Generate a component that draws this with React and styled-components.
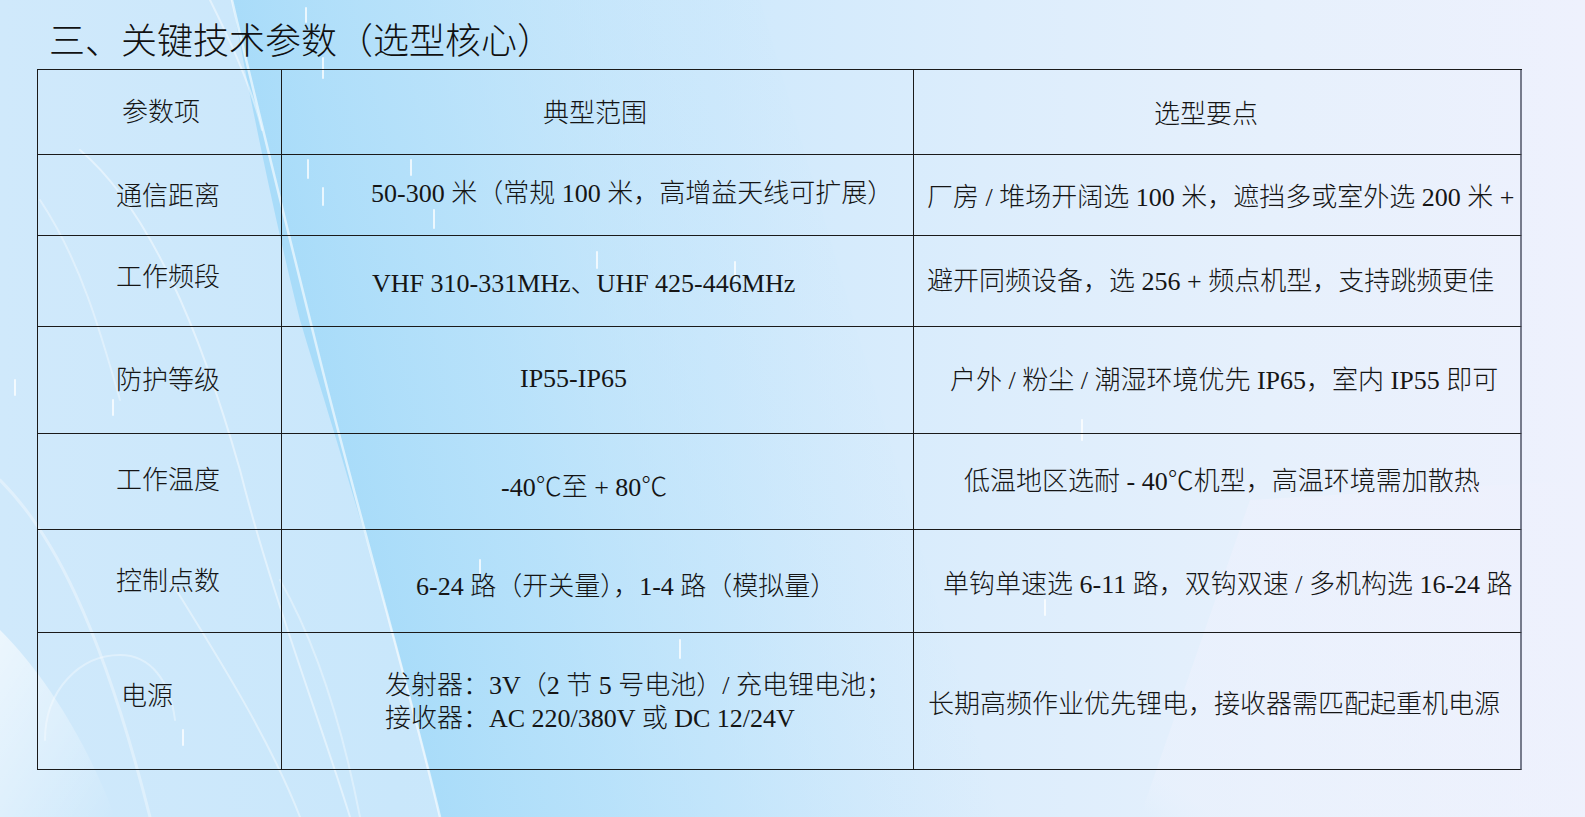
import React from "react";
import styled, { createGlobalStyle } from "styled-components";

const GlobalStyle = createGlobalStyle`
  html, body {
    margin: 0;
    padding: 0;
    overflow: hidden;
  }
  body {
    font-family: "Liberation Serif", "Noto Sans CJK SC", serif;
    color: #111;
  }
`;

const rows = [
  {
    label: "通信距离",
    range: ["50-300 米（常规 100 米，高增益天线可扩展）"],
    tip: "厂房 / 堆场开阔选 100 米，遮挡多或室外选 200 米 +",
    height: 81,
    pads: [78, 89, 13],
    dys: [1, -2, 2],
  },
  {
    label: "工作频段",
    range: ["VHF 310-331MHz、UHF 425-446MHz"],
    tip: "避开同频设备，选 256 + 频点机型，支持跳频更佳",
    height: 91,
    pads: [78, 90, 13],
    dys: [-4, 2, 0],
  },
  {
    label: "防护等级",
    range: ["IP55-IP65"],
    tip: "户外 / 粉尘 / 潮湿环境优先 IP65，室内 IP55 即可",
    height: 107,
    pads: [78, 238, 36],
    dys: [0, -2, 0],
  },
  {
    label: "工作温度",
    range: ["-40℃至 + 80℃"],
    tip: "低温地区选耐 - 40℃机型，高温环境需加散热",
    height: 96,
    pads: [78, 219, 50],
    dys: [-1, 6, 0],
  },
  {
    label: "控制点数",
    range: ["6-24 路（开关量），1-4 路（模拟量）"],
    tip: "单钩单速选 6-11 路，双钩双速 / 多机构选 16-24 路",
    height: 103,
    pads: [78, 134, 29],
    dys: [0, 5, 3],
  },
  {
    label: "电源",
    range: [
      "发射器：3V（2 节 5 号电池）/ 充电锂电池；",
      "接收器：AC 220/380V 或 DC 12/24V",
    ],
    tip: "长期高频作业优先锂电，接收器需匹配起重机电源",
    height: 137,
    pads: [83, 103, 14],
    dys: [-5, 1, 3],
  },
];

const Slide = styled.div`
  position: relative;
  width: 1585px;
  height: 817px;
  overflow: hidden;
  background: linear-gradient(
    90deg,
    #d0e9fb 0%,
    #c9e7fb 25%,
    #cfe9fc 45%,
    #dcedfc 62%,
    #e6f0fc 80%,
    #eef1fd 100%
  );
`;

const Backdrop = styled.svg`
  position: absolute;
  inset: 0;
  width: 100%;
  height: 100%;
  pointer-events: none;
`;

const Content = styled.div`
  position: relative;
  display: flex;
  flex-direction: column;
`;

const Title = styled.h1`
  margin: 0;
  height: 69px;
  box-sizing: border-box;
  padding: 6px 0 0 49px;
  display: flex;
  align-items: center;
  font-family: "Noto Sans CJK SC", sans-serif;
  font-weight: 300;
  font-size: 36px;
  letter-spacing: 0;
  text-spacing-trim: space-all;
  color: #111;
`;

const Table = styled.div`
  margin-left: 37px;
  width: 1485px;
  display: grid;
  grid-template-columns: 244px 632px 608px;
  border-top: 1px solid #1a1a1a;
  border-left: 1px solid #1a1a1a;
  box-sizing: border-box;
`;

const Cell = styled.div`
  box-sizing: border-box;
  height: ${(p) => p.$h}px;
  border-right: ${(p) => (p.$last ? "2px solid #767b8c" : "1px solid #1a1a1a")};
  border-bottom: 1px solid #1a1a1a;
  display: flex;
  flex-direction: column;
  justify-content: center;
  align-items: flex-start;
  padding-left: ${(p) => p.$pad || 0}px;
  padding-top: ${(p) => (p.$dy > 0 ? p.$dy * 2 : 0)}px;
  padding-bottom: ${(p) => (p.$dy < 0 ? -p.$dy * 2 : 0)}px;
  font-size: 26px;
  font-weight: 300;
  line-height: 33px;
  white-space: nowrap;
  color: #151515;
`;

const Line = styled.span`
  display: block;
`;

function Background() {
  return (
    <Backdrop viewBox="0 0 1585 817" preserveAspectRatio="none">
      <defs>
        <linearGradient id="band" gradientUnits="userSpaceOnUse" x1="250" y1="200" x2="820" y2="60">
          <stop offset="0" stopColor="#a6dbf9" stopOpacity="1" />
          <stop offset="0.35" stopColor="#b3e0fa" stopOpacity="0.8" />
          <stop offset="1" stopColor="#c9e7fb" stopOpacity="0" />
        </linearGradient>
        <linearGradient id="pale" gradientUnits="userSpaceOnUse" x1="1150" y1="817" x2="1400" y2="500">
          <stop offset="0" stopColor="#f0f4fe" stopOpacity="0" />
          <stop offset="0.1" stopColor="#edf2fd" stopOpacity="0.5" />
          <stop offset="1" stopColor="#eef1fd" stopOpacity="0.7" />
        </linearGradient>
        <linearGradient id="glow" x1="0" y1="0" x2="1" y2="1">
          <stop offset="0" stopColor="#ffffff" stopOpacity="0.6" />
          <stop offset="1" stopColor="#ffffff" stopOpacity="0" />
        </linearGradient>
      </defs>
      <path d="M232 0 L760 0 L1000 817 L440 817 C 400 640 330 420 300 320 C 275 220 250 100 232 0 Z" fill="url(#band)" />
      <path d="M1140 817 L1250 500 L1585 480 L1585 817 Z" fill="url(#pale)" />
      <path d="M0 630 C 50 680 90 750 115 817 L 0 817 Z" fill="url(#glow)" />
      <g fill="none" stroke="#ffffff" strokeLinecap="round">
        <path d="M232 0 C 260 120 290 240 320 360 C 360 520 410 690 440 817" strokeOpacity="0.6" strokeWidth="2.5" />
        <path d="M80 150 C 150 210 200 330 240 470 C 270 590 320 720 350 817" strokeOpacity="0.45" strokeWidth="2" />
        <path d="M40 200 C 80 260 100 330 120 400" strokeOpacity="0.35" strokeWidth="2" />
        <path d="M0 480 C 50 530 100 620 150 817" strokeOpacity="0.35" strokeWidth="3" />
        <path d="M45 740 C 45 690 80 655 120 655 C 150 655 170 680 175 720" strokeOpacity="0.35" strokeWidth="2" />
        <path d="M170 580 C 220 660 270 740 300 817" strokeOpacity="0.4" strokeWidth="2" />
        <path d="M280 580 C 320 650 345 740 360 817" strokeOpacity="0.35" strokeWidth="2" />
        <path d="M210 0 C 240 60 255 100 262 130" strokeOpacity="0.45" strokeWidth="2" />
      </g>
      <g stroke="#ffffff" strokeWidth="2" strokeOpacity="0.75" strokeLinecap="round">
        <line x1="306" y1="8" x2="306" y2="22" />
        <line x1="323" y1="58" x2="323" y2="78" />
        <line x1="308" y1="160" x2="308" y2="178" />
        <line x1="323" y1="188" x2="323" y2="205" />
        <line x1="411" y1="160" x2="411" y2="175" />
        <line x1="434" y1="210" x2="434" y2="228" />
        <line x1="597" y1="252" x2="597" y2="268" />
        <line x1="735" y1="262" x2="735" y2="280" />
        <line x1="1082" y1="420" x2="1082" y2="440" />
        <line x1="15" y1="380" x2="15" y2="395" />
        <line x1="113" y1="400" x2="113" y2="415" />
        <line x1="183" y1="730" x2="183" y2="745" />
        <line x1="480" y1="560" x2="480" y2="575" />
        <line x1="680" y1="640" x2="680" y2="658" />
        <line x1="1045" y1="600" x2="1045" y2="615" />
        <line x1="1405" y1="470" x2="1405" y2="485" />
        <line x1="1090" y1="690" x2="1090" y2="705" />
      </g>
    </Backdrop>
  );
}

export default function App() {
  return (
    <>
      <GlobalStyle />
      <Slide>
        <Background />
        <Content>
          <Title>三、关键技术参数（选型核心）</Title>
          <Table>
            <Cell $h={85} $pad={84}>参数项</Cell>
            <Cell $h={85} $pad={261} $dy={1}>典型范围</Cell>
            <Cell $h={85} $pad={240} $dy={2} $last>选型要点</Cell>
            {rows.map((row) => (
              <React.Fragment key={row.label}>
                <Cell $h={row.height} $pad={row.pads[0]} $dy={row.dys[0]}>
                  {row.label}
                </Cell>
                <Cell $h={row.height} $pad={row.pads[1]} $dy={row.dys[1]}>
                  {row.range.map((line) => (
                    <Line key={line}>{line}</Line>
                  ))}
                </Cell>
                <Cell $h={row.height} $pad={row.pads[2]} $dy={row.dys[2]} $last>
                  {row.tip}
                </Cell>
              </React.Fragment>
            ))}
          </Table>
        </Content>
      </Slide>
    </>
  );
}
